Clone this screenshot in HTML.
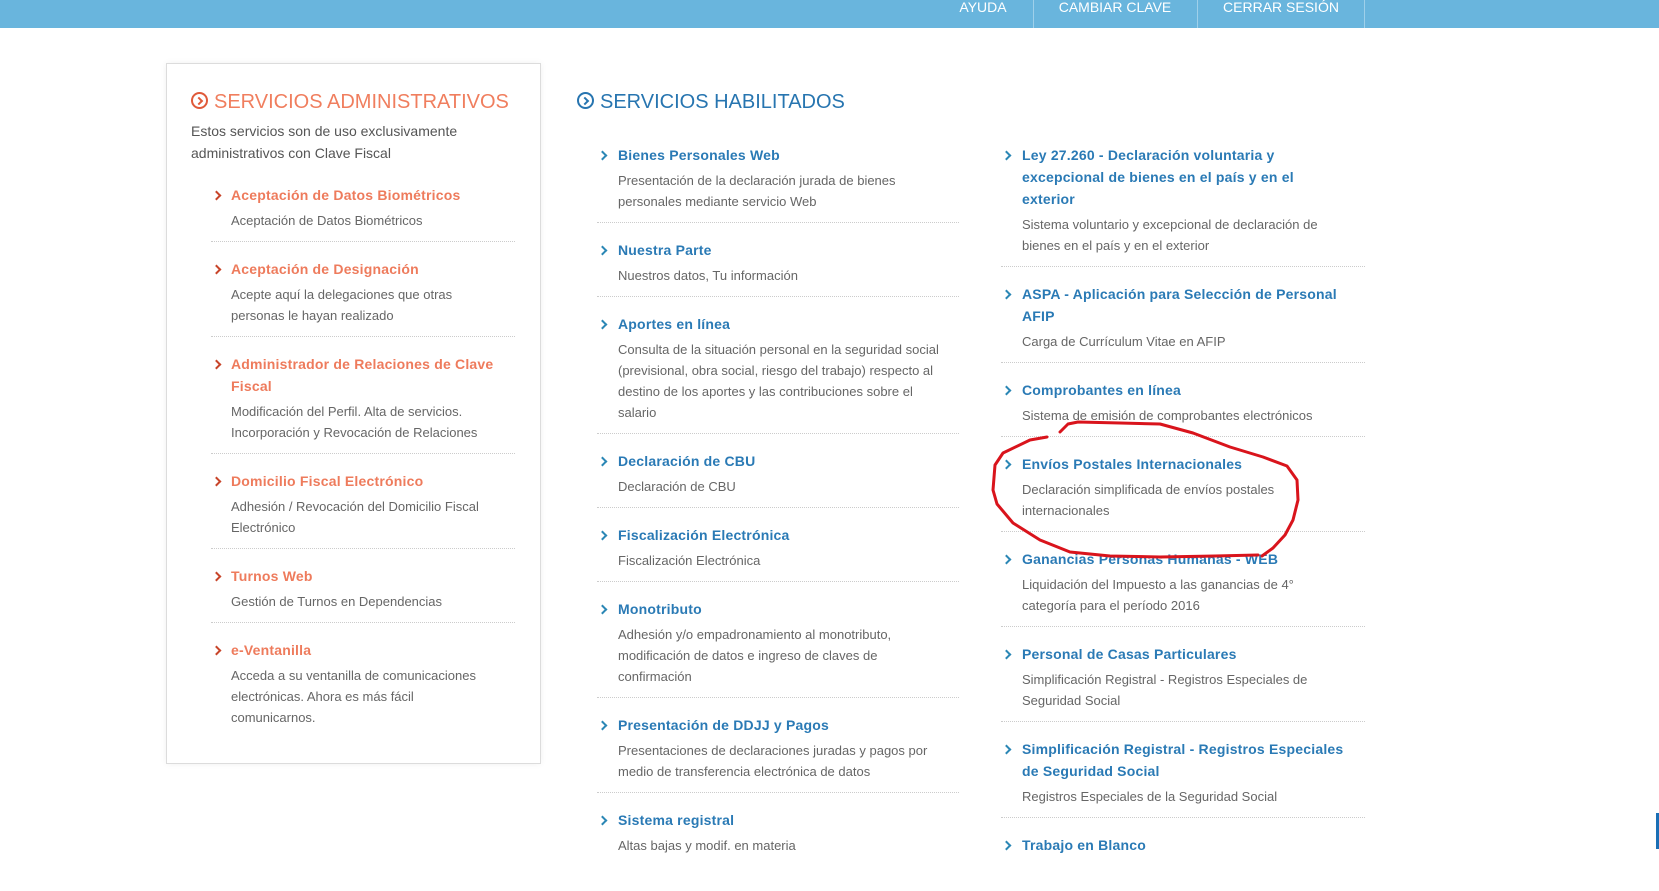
<!DOCTYPE html>
<html><head><meta charset="utf-8">
<style>
*{margin:0;padding:0;box-sizing:border-box}
body{width:1659px;height:849px;overflow:hidden;background:#fff;font-family:"Liberation Sans",Arial,sans-serif;position:relative}
.top{position:absolute;left:0;top:0;width:1659px;height:28px;background:#69b5dd}
.nav{position:absolute;top:-2px;color:#fff;font-size:14px;line-height:18px;text-align:center}
.vs{position:absolute;top:0;width:1px;height:28px;background:#9fd0ea}
.box{position:absolute;left:166px;top:63px;width:375px;height:701px;border:1px solid #dcdcdc;box-shadow:0 0 6px rgba(0,0,0,.06)}
h2{position:absolute;font-weight:normal;font-size:20px;line-height:26px;white-space:nowrap}
h2 .ic{display:inline-block;width:17px;height:17px;border:2px solid;border-radius:50%;vertical-align:-1px;margin-right:6px;position:relative}
h2 .ic:after{content:"";position:absolute;left:3px;top:3.5px;width:4px;height:4px;border-right:2px solid;border-top:2px solid;transform:rotate(45deg)}
.intro{position:absolute;left:191px;top:120px;font-size:14px;line-height:22px;color:#555;width:300px}
ul{list-style:none;position:absolute}
li{position:relative;padding:16px 0 10px 0;border-top:1px dotted #ccc}
li:first-child{border-top:none}
li .t{font-weight:bold;font-size:14px;line-height:22px;margin-bottom:4px;letter-spacing:.2px}
li .d{font-size:13px;line-height:21px;color:#666}
li:before{content:"";position:absolute;top:24px;width:5px;height:5px;border-right:2px solid;border-top:2px solid;transform:rotate(45deg)}
.l li{padding-left:20px}
.l li:before{left:2px;border-color:#c8452a}
.l .t{color:#ee7b5c}
.m li,.r li{padding-left:21px}
.m li:before,.r li:before{left:2px;border-color:#2b87b5}
.m .t,.r .t{color:#2a7ab5}
</style></head><body>
<div class="top"></div>
<div class="nav" style="left:943px;width:80px">AYUDA</div>
<div class="vs" style="left:1033px"></div>
<div class="nav" style="left:1040px;width:150px">CAMBIAR CLAVE</div>
<div class="vs" style="left:1197px"></div>
<div class="nav" style="left:1204px;width:154px">CERRAR SESIÓN</div>
<div class="vs" style="left:1364px"></div>

<div class="box"></div>
<h2 style="left:191px;top:89px;color:#f07e5e"><span class="ic" style="color:#e05a3a"></span>SERVICIOS ADMINISTRATIVOS</h2>
<div class="intro">Estos servicios son de uso exclusivamente administrativos con Clave Fiscal</div>
<ul class="l" style="left:211px;top:168px;width:304px">
<li><div class="t">Aceptación de Datos Biométricos</div><div class="d">Aceptación de Datos Biométricos</div></li>
<li><div class="t">Aceptación de Designación</div><div class="d">Acepte aquí la delegaciones que otras<br>personas le hayan realizado</div></li>
<li><div class="t">Administrador de Relaciones de Clave<br>Fiscal</div><div class="d">Modificación del Perfil. Alta de servicios.<br>Incorporación y Revocación de Relaciones</div></li>
<li><div class="t">Domicilio Fiscal Electrónico</div><div class="d">Adhesión / Revocación del Domicilio Fiscal<br>Electrónico</div></li>
<li><div class="t">Turnos Web</div><div class="d">Gestión de Turnos en Dependencias</div></li>
<li style="border-bottom:none"><div class="t">e-Ventanilla</div><div class="d">Acceda a su ventanilla de comunicaciones<br>electrónicas. Ahora es más fácil<br>comunicarnos.</div></li>
</ul>

<h2 style="left:577px;top:89px;color:#2775b0"><span class="ic" style="color:#2775b0"></span>SERVICIOS HABILITADOS</h2>
<ul class="m" style="left:597px;top:128px;width:362px">
<li><div class="t">Bienes Personales Web</div><div class="d">Presentación de la declaración jurada de bienes<br>personales mediante servicio Web</div></li>
<li><div class="t">Nuestra Parte</div><div class="d">Nuestros datos, Tu información</div></li>
<li><div class="t">Aportes en línea</div><div class="d">Consulta de la situación personal en la seguridad social<br>(previsional, obra social, riesgo del trabajo) respecto al<br>destino de los aportes y las contribuciones sobre el<br>salario</div></li>
<li><div class="t">Declaración de CBU</div><div class="d">Declaración de CBU</div></li>
<li><div class="t">Fiscalización Electrónica</div><div class="d">Fiscalización Electrónica</div></li>
<li><div class="t">Monotributo</div><div class="d">Adhesión y/o empadronamiento al monotributo,<br>modificación de datos e ingreso de claves de<br>confirmación</div></li>
<li><div class="t">Presentación de DDJJ y Pagos</div><div class="d">Presentaciones de declaraciones juradas y pagos por<br>medio de transferencia electrónica de datos</div></li>
<li><div class="t">Sistema registral</div><div class="d">Altas bajas y modif. en materia</div></li>
</ul>

<ul class="r" style="left:1001px;top:128px;width:364px">
<li><div class="t">Ley 27.260 - Declaración voluntaria y<br>excepcional de bienes en el país y en el<br>exterior</div><div class="d">Sistema voluntario y excepcional de declaración de<br>bienes en el país y en el exterior</div></li>
<li><div class="t">ASPA - Aplicación para Selección de Personal<br>AFIP</div><div class="d">Carga de Currículum Vitae en AFIP</div></li>
<li><div class="t">Comprobantes en línea</div><div class="d">Sistema de emisión de comprobantes electrónicos</div></li>
<li><div class="t">Envíos Postales Internacionales</div><div class="d">Declaración simplificada de envíos postales<br>internacionales</div></li>
<li><div class="t">Ganancias Personas Humanas - WEB</div><div class="d">Liquidación del Impuesto a las ganancias de 4°<br>categoría para el período 2016</div></li>
<li><div class="t">Personal de Casas Particulares</div><div class="d">Simplificación Registral - Registros Especiales de<br>Seguridad Social</div></li>
<li><div class="t">Simplificación Registral - Registros Especiales<br>de Seguridad Social</div><div class="d">Registros Especiales de la Seguridad Social</div></li>
<li><div class="t">Trabajo en Blanco</div><div class="d">&nbsp;</div></li>
</ul>

<svg style="position:absolute;left:0;top:0" width="1659" height="849">
<path d="M1060 432 L1068 424 L1078 422 L1120 423 L1160 424 L1193 433 L1230 447 L1263 457 L1287 466 L1297 480 L1298 500 L1293 520 L1285 535 L1273 548 L1262 556 M1047 437 L1030 440 L1003 453 L995 465 L993 490 L997 504 L1013 523 L1040 540 L1070 552 L1110 556 L1160 557 L1215 556 L1258 555" fill="none" stroke="#d9141c" stroke-width="3" stroke-linejoin="round" stroke-linecap="round"/>
</svg>
<div style="position:absolute;left:1656px;top:813px;width:3px;height:36px;background:#1a6fb5"></div>
</body></html>
